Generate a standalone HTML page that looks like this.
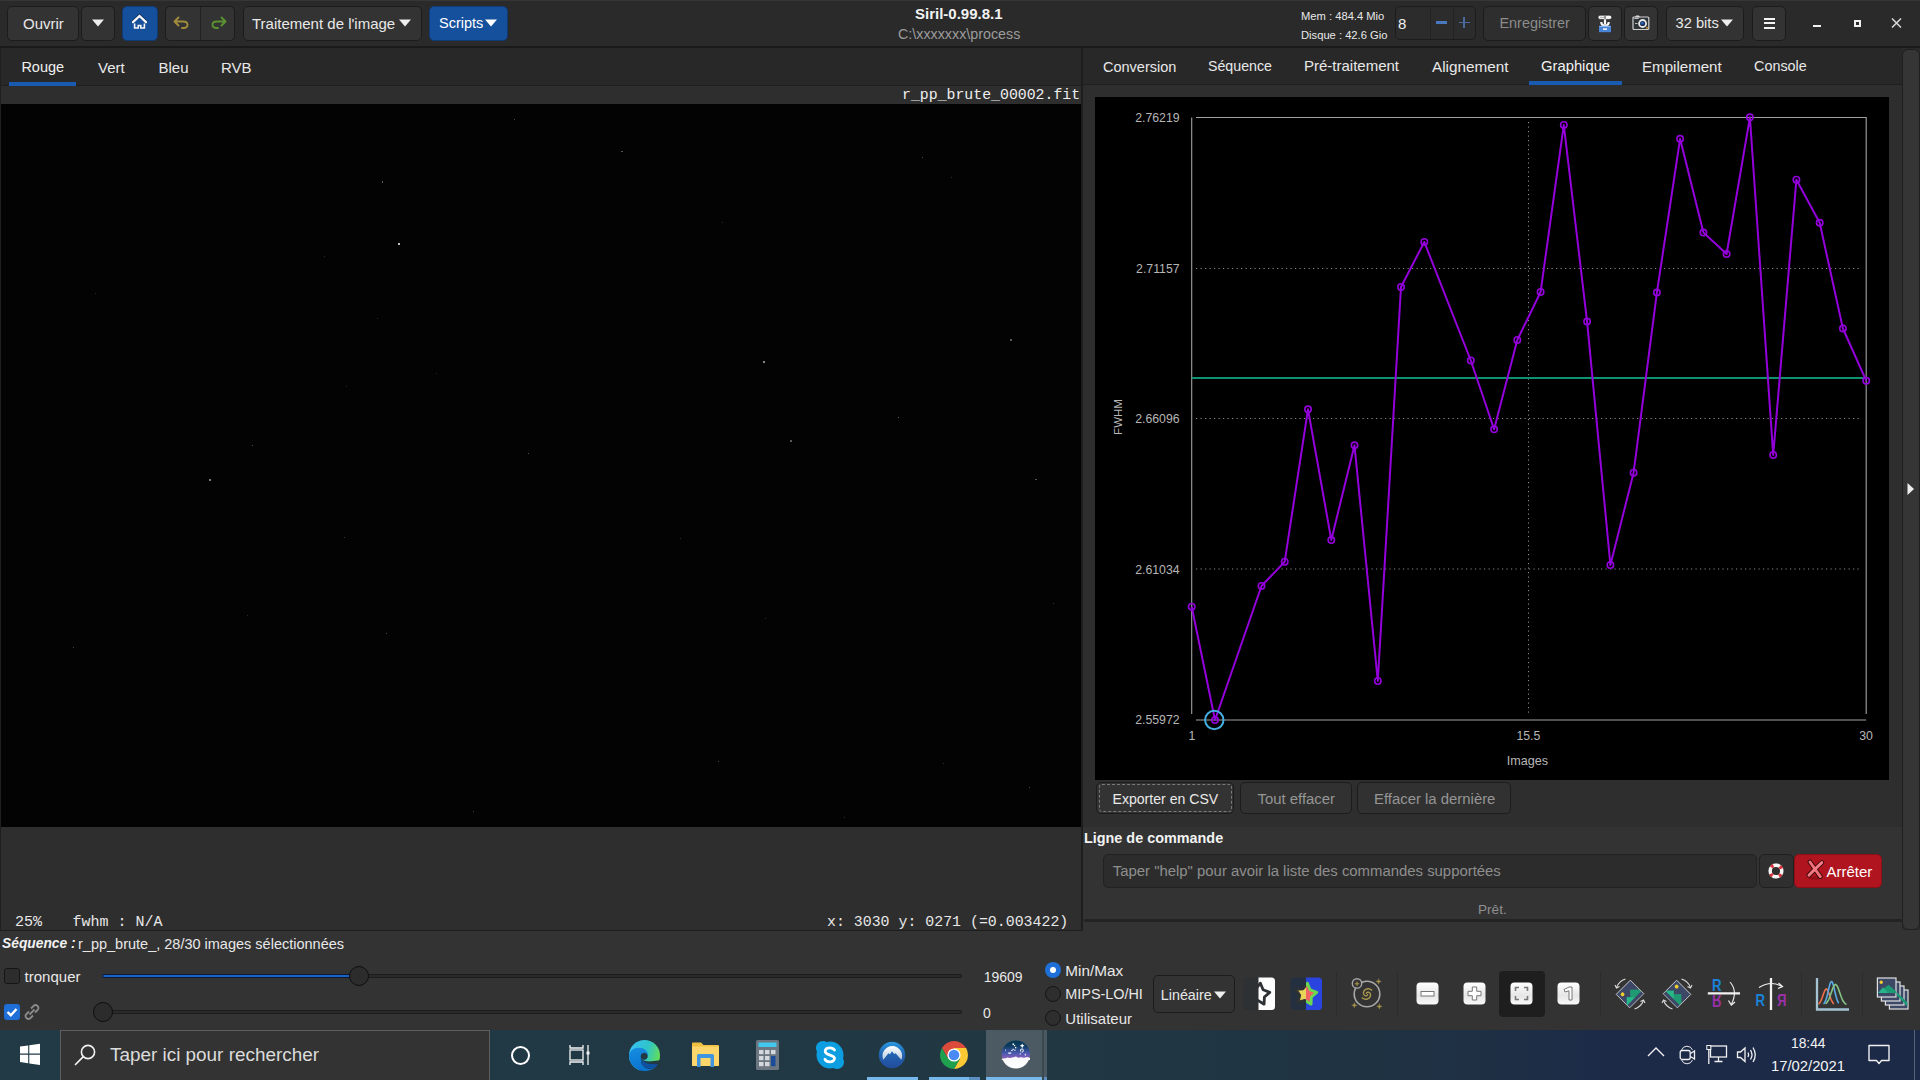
<!DOCTYPE html>
<html><head><meta charset="utf-8">
<style>
*{box-sizing:border-box;margin:0;padding:0}
html,body{width:1920px;height:1080px;overflow:hidden;background:#333333;font-family:"Liberation Sans",sans-serif;color:#e8e8e8}
.a{position:absolute}
.btn{position:absolute;background:#333333;border:1px solid #1c1c1c;border-radius:5px}
.blue{background:#15509c;border-color:#0f3a73}
.t{position:absolute;white-space:pre;line-height:1}
.mono{font-family:"Liberation Mono",monospace}
</style></head><body>

<!-- HEADER -->
<div class="a" style="left:0;top:0;width:1920px;height:47px;background:#2a2a2a"></div><div class="a" style="left:0;top:0;width:1920px;height:1px;background:#363636"></div>
<div class="a" style="left:0;top:46px;width:1920px;height:2px;background:#1a1a1a"></div>
<div class="btn" style="left:7px;top:6px;width:72px;height:35px"></div>
<div class="t" style="left:23px;top:16px;font-size:15px">Ouvrir</div>
<div class="btn" style="left:81px;top:6px;width:34px;height:35px"></div>
<svg class="a" style="left:91px;top:19px" width="14" height="8"><path d="M1 0.5 L13 0.5 L7 7.5 Z" fill="#eee"/></svg>
<div class="btn blue" style="left:122px;top:6px;width:36px;height:35px"></div>
<svg class="a" style="left:131px;top:13px" width="18" height="18" viewBox="0 0 18 18"><path d="M2 9.2 L8.5 3 L15 9.2" fill="none" stroke="#111" stroke-width="3" stroke-linecap="round" opacity="0.45" transform="translate(0 -0.6)"/><path d="M2 9.2 L8.5 3 L15 9.2" fill="none" stroke="#fafafa" stroke-width="2.3" stroke-linecap="round"/><path d="M3.6 10.6 V15 H7.2 V12.5 H9.8 V15 H13.4 V10.6" fill="none" stroke="#f4f4f4" stroke-width="1.6"/></svg>
<div class="btn" style="left:165px;top:6px;width:70px;height:35px"></div>
<div class="a" style="left:200px;top:7px;width:1px;height:33px;background:#222"></div>
<svg class="a" style="left:172px;top:15px" width="20" height="16" viewBox="0 0 20 16"><path d="M6.5 2.5 L2.5 6.5 L6.5 10.5 M3 6.5 L11 6.5 Q15.5 6.5 15.5 9.8 Q15.5 13 11.5 13 L10 13" fill="none" stroke="#a08c3c" stroke-width="1.9" stroke-linecap="round" stroke-linejoin="round"/></svg>
<svg class="a" style="left:208px;top:15px" width="20" height="16" viewBox="0 0 20 16"><path d="M13.5 2.5 L17.5 6.5 L13.5 10.5 M17 6.5 L9 6.5 Q4.5 6.5 4.5 9.8 Q4.5 13 8.5 13 L10 13" fill="none" stroke="#5a9232" stroke-width="1.9" stroke-linecap="round" stroke-linejoin="round"/></svg>
<div class="btn" style="left:243px;top:6px;width:179px;height:35px"></div>
<div class="t" style="left:252px;top:16px;font-size:15px">Traitement de l'image</div>
<svg class="a" style="left:398px;top:19px" width="14" height="8"><path d="M1 0.5 L13 0.5 L7 7.5 Z" fill="#eee"/></svg>
<div class="btn blue" style="left:429px;top:6px;width:79px;height:35px"></div>
<div class="t" style="left:439px;top:16px;font-size:14.5px;color:#fff">Scripts</div>
<svg class="a" style="left:484px;top:19px" width="14" height="8"><path d="M1 0.5 L13 0.5 L7 7.5 Z" fill="#fff"/></svg>

<div class="t" style="left:915px;top:6.3px;font-size:15px;font-weight:bold;color:#f2f2f2">Siril-0.99.8.1</div>
<div class="t" style="left:898px;top:27.2px;font-size:14.3px;color:#9c9c9c">C:\xxxxxxx\process</div>

<div class="t" style="left:1301px;top:10.5px;font-size:11.2px;color:#e8e8e8">Mem : 484.4 Mio</div>
<div class="t" style="left:1301px;top:29.9px;font-size:11.2px;color:#e8e8e8">Disque : 42.6 Gio</div>
<div class="btn" style="left:1395px;top:6px;width:81px;height:34px;background:#2c2c2c"></div>
<div class="a" style="left:1430px;top:7px;width:1px;height:32px;background:#232323"></div>
<div class="a" style="left:1453px;top:7px;width:1px;height:32px;background:#232323"></div>
<div class="t" style="left:1398px;top:15.5px;font-size:15px;color:#f0f0f0">8</div>
<div class="a" style="left:1435.5px;top:21.3px;width:11px;height:2.6px;background:#4a78c0"></div>
<div class="a" style="left:1458.5px;top:21.8px;width:11px;height:1.6px;background:#4a6a9c"></div>
<div class="a" style="left:1463.2px;top:17px;width:1.6px;height:11px;background:#4a6a9c"></div>
<div class="btn" style="left:1483px;top:6px;width:103px;height:35px;background:#2e2e2e"></div>
<div class="t" style="left:1499.5px;top:16px;font-size:14.4px;color:#8c8c8c">Enregistrer</div>
<div class="btn" style="left:1588px;top:6px;width:34px;height:35px"></div>
<svg class="a" style="left:1596px;top:13px" width="18" height="20" viewBox="0 0 18 20"><rect x="2" y="2.2" width="13.7" height="4.2" rx="2" fill="#fafafa" stroke="#111" stroke-width="0.6"/><rect x="3.6" y="3.8" width="5" height="1" fill="#aaa"/><rect x="8.6" y="3" width="0.9" height="2.8" fill="#222"/><path d="M9 6.3 V11.5" stroke="#fafafa" stroke-width="2.2"/><path d="M5.3 9 Q5.3 12.6 9 12.6 Q12.7 12.6 12.7 9" fill="none" stroke="#fafafa" stroke-width="2.2"/><rect x="3" y="12.8" width="12" height="6.4" fill="#4a86d8"/><rect x="3.3" y="13.2" width="11.4" height="0.8" fill="#9cc0f0"/><rect x="7" y="15.3" width="4" height="1.6" fill="#f4f4f4"/></svg>
<div class="btn" style="left:1624px;top:6px;width:34px;height:35px"></div>
<svg class="a" style="left:1632px;top:15px" width="18" height="16" viewBox="0 0 18 16"><rect x="1" y="2" width="15.8" height="12.5" rx="1" fill="#2e3338" stroke="#cfcfcf" stroke-width="1.2"/><path d="M3 2.2 L4 0.8 L7 0.8 L8 2.2" fill="#ddd" stroke="#bbb" stroke-width="0.6"/><rect x="2.2" y="3" width="4.5" height="1" fill="#bbb"/><rect x="3" y="8" width="2.5" height="0.9" fill="#ccc"/><circle cx="10.6" cy="8.5" r="4.4" fill="#e8e8e8"/><circle cx="10.6" cy="8.5" r="2.6" fill="#1d2f55"/><circle cx="10.3" cy="8.2" r="1.4" fill="#2a5fb8"/><rect x="14.2" y="12" width="1.6" height="1.6" fill="#e0a030"/></svg>
<div class="btn" style="left:1666px;top:6px;width:78px;height:35px"></div>
<div class="t" style="left:1675.5px;top:16px;font-size:14.7px">32 bits</div>
<svg class="a" style="left:1720px;top:19px" width="14" height="8"><path d="M1 0.5 L13 0.5 L7 7.5 Z" fill="#eee"/></svg>
<div class="btn" style="left:1752px;top:6px;width:34px;height:35px"></div>
<div class="a" style="left:1764px;top:17.5px;width:10.5px;height:2px;background:#f4f4f4"></div>
<div class="a" style="left:1764px;top:22px;width:10.5px;height:2px;background:#f4f4f4"></div>
<div class="a" style="left:1764px;top:26.5px;width:10.5px;height:2px;background:#f4f4f4"></div>
<div class="a" style="left:1813px;top:25px;width:8px;height:2px;background:#f0f0f0"></div>
<div class="a" style="left:1853.5px;top:19.8px;width:7px;height:7px;border:2px solid #f0f0f0"></div>
<svg class="a" style="left:1891px;top:18px" width="11" height="10" viewBox="0 0 11 10"><path d="M1 0.5 L10 9.5 M10 0.5 L1 9.5" stroke="#d8d8d8" stroke-width="1.5"/></svg>

<!-- LEFT PANEL -->
<div class="a" style="left:0;top:48px;width:1081px;height:37px;background:#282828"></div>
<div class="a" style="left:0;top:85px;width:1081px;height:1px;background:#1f1f1f"></div>
<div class="a" style="left:0;top:86px;width:1081px;height:18px;background:#2e2e2e"></div>
<div class="a" style="left:0;top:104px;width:1081px;height:723px;background:#030303"></div>
<div class="a" style="left:0;top:827px;width:1081px;height:103px;background:#2e2e2e"></div>
<div class="a" style="left:397.7px;top:243.0px;width:2px;height:2px;background:#ffffff;border-radius:50%"></div>
<div class="a" style="left:382.1px;top:181.3px;width:1.3px;height:1.3px;background:#707070;border-radius:50%"></div>
<div class="a" style="left:513.7px;top:118.7px;width:1.2px;height:1.2px;background:#616161;border-radius:50%"></div>
<div class="a" style="left:251.7px;top:445.1px;width:1.2px;height:1.2px;background:#696969;border-radius:50%"></div>
<div class="a" style="left:528.1px;top:452.7px;width:1.2px;height:1.2px;background:#696969;border-radius:50%"></div>
<div class="a" style="left:323.5px;top:256.2px;width:1px;height:1px;background:#3c3c3c;border-radius:50%"></div>
<div class="a" style="left:376.8px;top:317.8px;width:1px;height:1px;background:#343434;border-radius:50%"></div>
<div class="a" style="left:435.5px;top:372.8px;width:1px;height:1px;background:#343434;border-radius:50%"></div>
<div class="a" style="left:346.2px;top:385.5px;width:1px;height:1px;background:#343434;border-radius:50%"></div>
<div class="a" style="left:95.2px;top:292.8px;width:1px;height:1px;background:#343434;border-radius:50%"></div>
<div class="a" style="left:763.4px;top:361.4px;width:1.8px;height:1.8px;background:#acacac;border-radius:50%"></div>
<div class="a" style="left:621.4px;top:151.1px;width:1.2px;height:1.2px;background:#616161;border-radius:50%"></div>
<div class="a" style="left:922.1px;top:157.1px;width:1.2px;height:1.2px;background:#616161;border-radius:50%"></div>
<div class="a" style="left:897.6px;top:417.0px;width:1.4px;height:1.4px;background:#7f7f7f;border-radius:50%"></div>
<div class="a" style="left:790.4px;top:440.4px;width:1.2px;height:1.2px;background:#616161;border-radius:50%"></div>
<div class="a" style="left:1010.4px;top:339.4px;width:1.2px;height:1.2px;background:#616161;border-radius:50%"></div>
<div class="a" style="left:950.8px;top:176.8px;width:1px;height:1px;background:#3c3c3c;border-radius:50%"></div>
<div class="a" style="left:722.2px;top:222.2px;width:1px;height:1px;background:#3c3c3c;border-radius:50%"></div>
<div class="a" style="left:209.2px;top:479.1px;width:1.6px;height:1.6px;background:#969696;border-radius:50%"></div>
<div class="a" style="left:386.2px;top:633.1px;width:1.2px;height:1.2px;background:#5a5a5a;border-radius:50%"></div>
<div class="a" style="left:72.7px;top:647.1px;width:1.2px;height:1.2px;background:#5a5a5a;border-radius:50%"></div>
<div class="a" style="left:343.8px;top:536.9px;width:1px;height:1px;background:#4b4b4b;border-radius:50%"></div>
<div class="a" style="left:473.2px;top:810.5px;width:1.2px;height:1.2px;background:#5a5a5a;border-radius:50%"></div>
<div class="a" style="left:246.5px;top:614.7px;width:1px;height:1px;background:#343434;border-radius:50%"></div>
<div class="a" style="left:1035.4px;top:478.9px;width:1.2px;height:1.2px;background:#616161;border-radius:50%"></div>
<div class="a" style="left:718.2px;top:760.5px;width:1.2px;height:1.2px;background:#616161;border-radius:50%"></div>
<div class="a" style="left:1053.4px;top:602.7px;width:1px;height:1px;background:#4b4b4b;border-radius:50%"></div>
<div class="a" style="left:764.9px;top:617.8px;width:1px;height:1px;background:#3c3c3c;border-radius:50%"></div>
<div class="a" style="left:1028.6px;top:786.6px;width:1.2px;height:1.2px;background:#5a5a5a;border-radius:50%"></div>
<div class="a" style="left:844.4px;top:816.8px;width:1px;height:1px;background:#3c3c3c;border-radius:50%"></div>
<div class="a" style="left:942.7px;top:763.4px;width:1px;height:1px;background:#3c3c3c;border-radius:50%"></div>
<div class="a" style="left:680.0px;top:538.0px;width:1px;height:1px;background:#3c3c3c;border-radius:50%"></div>
<div class="a" style="left:0;top:48px;width:1px;height:882px;background:#1f1f1f"></div>
<div class="t" style="left:21.4px;top:60.1px;font-size:14.5px;color:#f0f0f0">Rouge</div>
<div class="t" style="left:98px;top:60.1px;font-size:15px;color:#e8e8e8">Vert</div>
<div class="t" style="left:158.5px;top:60.1px;font-size:15px;color:#e8e8e8">Bleu</div>
<div class="t" style="left:221px;top:60.1px;font-size:15px;color:#e8e8e8">RVB</div>
<div class="a" style="left:9px;top:82px;width:67px;height:4px;background:#1a5bb2"></div>
<div class="t mono" style="left:902px;top:88.3px;font-size:14.85px;color:#efefef">r_pp_brute_00002.fit</div>
<div class="t mono" style="left:15px;top:914.5px;font-size:15px;color:#e8e8e8">25%</div><div class="t mono" style="left:72.5px;top:914.5px;font-size:15px;color:#e8e8e8">fwhm : N/A</div>
<div class="t mono" style="left:827px;top:914.5px;font-size:14.9px;color:#e8e8e8">x: 3030 y: 0271 (=0.003422)</div>
<div class="a" style="left:1081px;top:48px;width:2px;height:882px;background:#1e1e1e"></div>
<div class="a" style="left:0;top:929.5px;width:1083px;height:1px;background:#1e1e1e"></div>

<!-- RIGHT PANEL -->
<div class="a" style="left:1083px;top:48px;width:819px;height:36px;background:#282828"></div>
<div class="a" style="left:1083px;top:84px;width:819px;height:1px;background:#1f1f1f"></div>
<div class="t" style="left:1103px;top:59.8px;font-size:14.5px">Conversion</div>
<div class="t" style="left:1208px;top:59.3px;font-size:14.2px">Séquence</div>
<div class="t" style="left:1304px;top:58px;font-size:15px">Pré-traitement</div>
<div class="t" style="left:1432px;top:59.3px;font-size:15.3px">Alignement</div>
<div class="t" style="left:1541px;top:59.3px;font-size:14.8px;color:#f2f2f2">Graphique</div>
<div class="t" style="left:1642px;top:59.3px;font-size:15.1px">Empilement</div>
<div class="t" style="left:1754px;top:59.3px;font-size:14.4px">Console</div>
<div class="a" style="left:1529px;top:81px;width:93px;height:4px;background:#1a5bb2"></div>
<div class="a" style="left:1083px;top:85px;width:819px;height:742px;background:#2e2e2e"></div>
<div class="a" style="left:1083px;top:827px;width:819px;height:92px;background:#333333"></div>
<div class="a" style="left:1084px;top:919.2px;width:818px;height:3.3px;background:#232323;border-radius:1.5px"></div>

<div class="a" style="left:1902px;top:48px;width:18px;height:882px;background:#2a2a2a"></div>
<div class="a" style="left:1902px;top:48.5px;width:18px;height:881px;background:#353535;border:1px solid #1f1f1f;border-radius:6px"></div>

<!-- GRAPH -->
<svg class="a" style="left:1095px;top:97px" width="794" height="683" viewBox="1095 97 794 683">
<rect x="1095" y="97" width="794" height="683" fill="#000"/>
<g stroke="#8a8a8a" stroke-width="1" stroke-dasharray="1.2 3.3" fill="none">
<path d="M1196 268.5 H1862 M1196 418.5 H1862 M1196 569 H1862"/>
<path d="M1528.5 122 V714"/>
</g>
<g stroke="#a2a2a2" stroke-width="1.1" fill="none">
<path d="M1191.7 117.5 V714 M1196 117.5 H1866.2 V714 M1196 720 H1866.2"/>
</g>
<path d="M1191.7 378 H1866.2" stroke="#0f9272" stroke-width="2"/>
<polyline points="1191.7,606.7 1215.0,720 1261.5,586 1284.7,561.7 1308.0,409.3 1331.3,540 1354.5,445.3 1377.8,681 1401.0,287 1424.3,242 1470.8,360.5 1494.1,429.3 1517.3,340 1540.6,292 1563.8,125 1587.1,321.6 1610.4,565 1633.6,472.7 1656.9,292.6 1680.1,138.8 1703.4,232.6 1726.6,254 1749.9,117.3 1773.2,455 1796.4,179.7 1819.7,222.8 1842.9,328.5 1866.2,380.7" fill="none" stroke="#9400dc" stroke-width="2" stroke-linejoin="round"/>
<g fill="none" stroke="#9400dc" stroke-width="1.6"><circle cx="1191.7" cy="606.7" r="3.2"/><circle cx="1215.0" cy="720" r="3.2"/><circle cx="1261.5" cy="586" r="3.2"/><circle cx="1284.7" cy="561.7" r="3.2"/><circle cx="1308.0" cy="409.3" r="3.2"/><circle cx="1331.3" cy="540" r="3.2"/><circle cx="1354.5" cy="445.3" r="3.2"/><circle cx="1377.8" cy="681" r="3.2"/><circle cx="1401.0" cy="287" r="3.2"/><circle cx="1424.3" cy="242" r="3.2"/><circle cx="1470.8" cy="360.5" r="3.2"/><circle cx="1494.1" cy="429.3" r="3.2"/><circle cx="1517.3" cy="340" r="3.2"/><circle cx="1540.6" cy="292" r="3.2"/><circle cx="1563.8" cy="125" r="3.2"/><circle cx="1587.1" cy="321.6" r="3.2"/><circle cx="1610.4" cy="565" r="3.2"/><circle cx="1633.6" cy="472.7" r="3.2"/><circle cx="1656.9" cy="292.6" r="3.2"/><circle cx="1680.1" cy="138.8" r="3.2"/><circle cx="1703.4" cy="232.6" r="3.2"/><circle cx="1726.6" cy="254" r="3.2"/><circle cx="1749.9" cy="117.3" r="3.2"/><circle cx="1773.2" cy="455" r="3.2"/><circle cx="1796.4" cy="179.7" r="3.2"/><circle cx="1819.7" cy="222.8" r="3.2"/><circle cx="1842.9" cy="328.5" r="3.2"/><circle cx="1866.2" cy="380.7" r="3.2"/></g>
<circle cx="1214.3" cy="720" r="9.2" fill="none" stroke="#45aee0" stroke-width="2"/>
<g font-family="Liberation Sans" font-size="12.3" fill="#b6b6b6" text-anchor="end">
<text x="1179.6" y="122.2">2.76219</text>
<text x="1179.6" y="272.5">2.71157</text>
<text x="1179.6" y="423">2.66096</text>
<text x="1179.6" y="573.6">2.61034</text>
<text x="1179.6" y="724">2.55972</text>
</g>
<g font-family="Liberation Sans" font-size="12.3" fill="#b6b6b6" text-anchor="middle">
<text x="1192" y="739.7">1</text>
<text x="1528.4" y="739.7">15.5</text>
<text x="1866" y="739.7">30</text>
<text x="1527.3" y="764.5" font-size="12.6">Images</text>
<text x="0" y="0" font-size="11.5" transform="translate(1121.5 417) rotate(-90)">FWHM</text>
</g>
</svg>
<svg class="a" style="left:1906px;top:482px" width="9" height="14"><path d="M1.5 1 L8 7 L1.5 13 Z" fill="#eee"/></svg>
<div class="btn" style="left:1096px;top:782px;width:138px;height:32px;background:#333"></div>
<div class="a" style="left:1098.5px;top:784px;width:133px;height:28px;border:1px dashed #7a7a7a;border-radius:3px"></div>
<div class="t" style="left:1112.5px;top:792.3px;font-size:14.1px;color:#eaeaea">Exporter en CSV</div>
<div class="btn" style="left:1240px;top:782px;width:112px;height:32px;background:#313131"></div>
<div class="t" style="left:1257.5px;top:791.5px;font-size:14.9px;color:#959595">Tout effacer</div>
<div class="btn" style="left:1357px;top:782px;width:154px;height:32px;background:#313131"></div>
<div class="t" style="left:1374px;top:791.5px;font-size:14.9px;color:#959595">Effacer la dernière</div>
<div class="t" style="left:1084px;top:830.5px;font-size:14.4px;font-weight:bold;color:#f2f2f2">Ligne de commande</div>
<div class="btn" style="left:1103px;top:854px;width:654px;height:34px;background:#2c2c2c;border-color:#222"></div>
<div class="t" style="left:1112.8px;top:863.5px;font-size:14.9px;color:#8e8e8e">Taper "help" pour avoir la liste des commandes supportées</div>
<div class="btn" style="left:1759px;top:854px;width:35px;height:34px;background:#2f2f2f;border-color:#202020"></div>
<svg class="a" style="left:1767px;top:862px" width="18" height="18" viewBox="0 0 18 18"><circle cx="9" cy="9" r="5.9" fill="none" stroke="#f6f6f6" stroke-width="3.6"/><circle cx="9" cy="9" r="5.9" fill="none" stroke="#e0323c" stroke-width="3.6" stroke-dasharray="2.6 6.67" stroke-dashoffset="-3.3"/><circle cx="9" cy="9" r="7.8" fill="none" stroke="#222" stroke-width="0.5" opacity="0.5"/></svg>
<div class="btn" style="left:1794px;top:854px;width:88px;height:34px;background:#b0141e;border-color:#8a1018"></div>
<svg class="a" style="left:1805px;top:859px" width="20" height="22" viewBox="0 0 20 22"><ellipse cx="10" cy="19" rx="6" ry="1.6" fill="#6a0a10" opacity="0.5"/><g stroke-linecap="round"><path d="M5 3 Q9.5 9.5 15.3 17.6" stroke="#2a0506" stroke-width="4.6"/><path d="M16.8 3.6 Q10.5 9.5 3.9 16.2" stroke="#2a0506" stroke-width="4.6"/><path d="M5 3 Q9.5 9.5 15.3 17.6" stroke="#f0707a" stroke-width="3"/><path d="M16.8 3.6 Q10.5 9.5 3.9 16.2" stroke="#f27a84" stroke-width="3"/></g></svg>
<div class="t" style="left:1826.4px;top:864.3px;font-size:15px;color:#fff">Arrêter</div>
<div class="t" style="left:1478px;top:903.3px;font-size:13.6px;color:#8f8f8f">Prêt.</div>

<!-- BOTTOM BAR -->
<div class="t" style="left:2px;top:937px;font-size:13.8px;font-weight:bold;font-style:italic;color:#f2f2f2">Séquence :</div>
<div class="t" style="left:78px;top:936.7px;font-size:14.5px;color:#e8e8e8">r_pp_brute_, 28/30 images sélectionnées</div>
<div class="a" style="left:4px;top:968px;width:16px;height:16px;background:#2d2d2d;border:1px solid #151515;border-radius:3px"></div>
<div class="t" style="left:24.6px;top:969px;font-size:15px;color:#e8e8e8">tronquer</div>
<div class="a" style="left:102px;top:973.8px;width:860px;height:4px;background:#2a2a2a;border:1px solid #1c1c1c;border-radius:2px"></div>
<div class="a" style="left:102px;top:973.8px;width:257px;height:4px;background:#1c62c4;border:1px solid #0a1a33;border-radius:2px"></div>
<div class="a" style="left:349px;top:966px;width:20px;height:20px;background:#2c2c2c;border:1.3px solid #0e0e0e;border-radius:50%"></div>
<div class="a" style="left:4px;top:1004px;width:16px;height:16px;background:#1f6fd8;border-radius:3px"></div>
<svg class="a" style="left:4px;top:1004px" width="16" height="16"><path d="M3.5 8 L6.8 11.2 L12.5 5" stroke="#fff" stroke-width="2.4" fill="none"/></svg>
<svg class="a" style="left:23px;top:1003px" width="18" height="18" viewBox="0 0 18 18"><g fill="none" stroke="#8a8a8a" stroke-width="1.8"><path d="M8 5.5 L10.5 3 Q12.5 1 14.5 3 Q16.5 5 14.5 7 L12 9.5"/><path d="M10 12.5 L7.5 15 Q5.5 17 3.5 15 Q1.5 13 3.5 11 L6 8.5"/><path d="M6.5 11.5 L11.5 6.5"/></g></svg>
<div class="a" style="left:102px;top:1009.8px;width:860px;height:4px;background:#2a2a2a;border:1px solid #1c1c1c;border-radius:2px"></div>
<div class="a" style="left:93px;top:1001.5px;width:20px;height:20px;background:#2c2c2c;border:1.3px solid #0e0e0e;border-radius:50%"></div>
<div class="t" style="left:983.7px;top:969.8px;font-size:14px;color:#e8e8e8">19609</div>
<div class="t" style="left:983px;top:1005.6px;font-size:14px;color:#e8e8e8">0</div>
<div class="a" style="left:1045px;top:962px;width:16px;height:16px;background:#1f6fd8;border-radius:50%"></div>
<div class="a" style="left:1050px;top:967px;width:6px;height:6px;background:#fff;border-radius:50%"></div>
<div class="t" style="left:1065.3px;top:962.7px;font-size:15.3px;color:#e8e8e8">Min/Max</div>
<div class="a" style="left:1045px;top:986px;width:16px;height:16px;background:#2e2e2e;border:1px solid #151515;border-radius:50%"></div>
<div class="t" style="left:1065.3px;top:987px;font-size:14.4px;color:#e8e8e8">MIPS-LO/HI</div>
<div class="a" style="left:1045px;top:1010px;width:16px;height:16px;background:#2e2e2e;border:1px solid #151515;border-radius:50%"></div>
<div class="t" style="left:1065.3px;top:1010.6px;font-size:15px;color:#e8e8e8">Utilisateur</div>
<div class="btn" style="left:1153px;top:975px;width:82px;height:38px;background:#333;border-color:#1c1c1c"></div>
<div class="t" style="left:1160.8px;top:987.6px;font-size:14.3px;color:#e8e8e8">Linéaire</div>
<svg class="a" style="left:1213px;top:991px" width="14" height="8"><path d="M1 0.5 L13 0.5 L7 7.5 Z" fill="#eee"/></svg>
<!-- toolbar icons -->
<svg class="a" style="left:1243px;top:977px" width="33" height="34" viewBox="0 0 33 34"><path d="M4 0.5 H15.5 V33 H4 Q0.5 33 0.5 29.5 V4 Q0.5 0.5 4 0.5 Z" fill="#2e3134"/><path d="M15.5 0.5 H28.5 Q32 0.5 32 4 V29.5 Q32 33 28.5 33 H15.5 Z" fill="#fdfdfd"/><path d="M17.4 6.2 L20.1 12.8 L26.8 15.4 L21.4 20.0 L21.1 27.2 L14.9 23.4 L8.0 25.4 L9.7 18.4 L5.7 12.4 L12.9 11.8 Z" fill="none" stroke="#2e3134" stroke-width="2.8" stroke-linejoin="round"/></svg>
<svg class="a" style="left:1290px;top:977px" width="33" height="34" viewBox="0 0 33 34"><defs><clipPath id="cl"><rect x="0" y="0" width="16" height="34"/></clipPath><clipPath id="cr"><rect x="16" y="0" width="17" height="34"/></clipPath></defs><path d="M4 0.5 H16 V33 H4 Q0.5 33 0.5 29.5 V4 Q0.5 0.5 4 0.5 Z" fill="#243040"/><path d="M16 0.5 H28.5 Q32 0.5 32 4 V29.5 Q32 33 28.5 33 H16 Z" fill="#2a44e0"/><path d="M17.4 6.2 L20.1 12.8 L26.8 15.4 L21.4 20.0 L21.1 27.2 L14.9 23.4 L8.0 25.4 L9.7 18.4 L5.7 12.4 L12.9 11.8 Z" fill="#e8d458" stroke="#2e3134" stroke-width="2.8" stroke-linejoin="round" clip-path="url(#cl)"/><path d="M17.4 6.2 L20.1 12.8 L26.8 15.4 L21.4 20.0 L21.1 27.2 L14.9 23.4 L8.0 25.4 L9.7 18.4 L5.7 12.4 L12.9 11.8 Z" fill="#f06266" stroke="#68d850" stroke-width="2.8" stroke-linejoin="round" clip-path="url(#cr)"/></svg>
<div class="a" style="left:1336px;top:971px;width:1px;height:46px;background:#2c2c2c"></div>
<svg class="a" style="left:1345px;top:972px" width="45" height="44" viewBox="0 0 45 44"><circle cx="22" cy="22" r="12.8" fill="none" stroke="#a8a8a8" stroke-width="1.6"/><circle cx="12" cy="11.4" r="4.7" fill="#333" stroke="#a8a8a8" stroke-width="1.4"/><g fill="#a8984e" stroke="#a8984e" stroke-width="0.4" stroke-linejoin="round"><path d="M33.6 6.7 Q33.6 9.4 36.300000000000004 9.4 Q33.6 9.4 33.6 12.100000000000001 Q33.6 9.4 30.900000000000002 9.4 Q33.6 9.4 33.6 6.7 Z"/><path d="M9.4 30.500000000000004 Q9.4 33.2 12.100000000000001 33.2 Q9.4 33.2 9.4 35.900000000000006 Q9.4 33.2 6.7 33.2 Q9.4 33.2 9.4 30.500000000000004 Z"/><path d="M34.4 31.7 Q34.4 34.4 37.1 34.4 Q34.4 34.4 34.4 37.1 Q34.4 34.4 31.7 34.4 Q34.4 34.4 34.4 31.7 Z"/><path d="M12 9.5 Q12 11.8 14.3 11.8 Q12 11.8 12 14.100000000000001 Q12 11.8 9.7 11.8 Q12 11.8 12 9.5 Z"/></g><g fill="none" stroke="#a8984e" stroke-width="1.4" stroke-linecap="round"><path d="M22.51 22.61 L22.50 22.84 L22.43 23.07 L22.30 23.30 L22.11 23.50 L21.85 23.68 L21.55 23.80 L21.20 23.87 L20.83 23.88 L20.43 23.80 L20.03 23.65 L19.65 23.41 L19.29 23.09 L18.98 22.70 L18.73 22.23 L18.56 21.70 L18.48 21.12 L18.50 20.51 L18.62 19.89 L18.86 19.27 L19.21 18.68 L19.68 18.13 L20.24 17.65 L20.91 17.26 L21.65 16.97 L22.45 16.80 L23.30 16.77 L24.18 16.87 L25.05 17.13 L25.89 17.53 L26.67 18.08"/><path d="M21.49 21.39 L21.50 21.16 L21.57 20.93 L21.70 20.70 L21.89 20.50 L22.15 20.32 L22.45 20.20 L22.80 20.13 L23.17 20.12 L23.57 20.20 L23.97 20.35 L24.35 20.59 L24.71 20.91 L25.02 21.30 L25.27 21.77 L25.44 22.30 L25.52 22.88 L25.50 23.49 L25.38 24.11 L25.14 24.73 L24.79 25.32 L24.32 25.87 L23.76 26.35 L23.09 26.74 L22.35 27.03 L21.55 27.20 L20.70 27.23 L19.82 27.13 L18.95 26.87 L18.11 26.47 L17.33 25.92"/></g></svg>
<div class="a" style="left:1397px;top:971px;width:1px;height:46px;background:#2c2c2c"></div>
<div class="a" style="left:1499px;top:971px;width:46px;height:46px;background:#1e1e1e;border-radius:4px"></div>
<svg class="a" style="left:1416px;top:982px" width="23" height="23" viewBox="0 0 23 23"><defs><linearGradient id="zg" x1="0" y1="0" x2="0" y2="1"><stop offset="0" stop-color="#ffffff"/><stop offset="0.6" stop-color="#e6e6e6"/><stop offset="1" stop-color="#fafafa"/></linearGradient></defs><rect x="0.5" y="0.5" width="22" height="22" rx="4" fill="url(#zg)"/><rect x="5" y="9.5" width="13" height="4.5" fill="#fff" stroke="#777" stroke-width="1"/></svg>
<svg class="a" style="left:1463px;top:982px" width="23" height="23" viewBox="0 0 23 23"><rect x="0.5" y="0.5" width="22" height="22" rx="4" fill="url(#zg)"/><path d="M9.3 5 H13.7 V9.3 H18 V13.7 H13.7 V18 H9.3 V13.7 H5 V9.3 H9.3 Z" fill="#fff" stroke="#777" stroke-width="1"/></svg>
<svg class="a" style="left:1510px;top:982px" width="23" height="23" viewBox="0 0 23 23"><rect x="0.5" y="0.5" width="22" height="22" rx="4" fill="url(#zg)"/><g fill="none" stroke="#777" stroke-width="1.6"><path d="M5.5 9 V5.5 H9 M14 5.5 H17.5 V9 M17.5 14 V17.5 H14 M9 17.5 H5.5 V14"/></g></svg>
<svg class="a" style="left:1557px;top:982px" width="23" height="23" viewBox="0 0 23 23"><rect x="0.5" y="0.5" width="22" height="22" rx="4" fill="url(#zg)"/><path d="M7 7.5 L12 5 L15 5 L15 18 L12 18 L12 8.8 L8 10 Z" fill="#fff" stroke="#777" stroke-width="1"/></svg>
<div class="a" style="left:1600px;top:971px;width:1px;height:46px;background:#2c2c2c"></div>
<svg class="a" style="left:1612px;top:977px" width="36" height="34" viewBox="0 0 36 34"><g transform="rotate(-45 18 17)"><rect x="8" y="7.5" width="20" height="19" fill="#3d4866" stroke="#cfcfcf" stroke-width="0.9"/><circle cx="12.5" cy="12" r="1.9" fill="#f0cc30"/><path d="M8.5 24 L8.5 22 L13.5 17 L16 19.5 L21 14 L27.5 20 L27.5 24 Z" fill="#1f9a72"/><path d="M8.5 24 L8.5 22 L13.5 17 L20 24 Z" fill="#28b888"/><rect x="8.5" y="23" width="19" height="3" fill="#3d4866"/></g><path d="M4.5 10.5 Q7 4 13.5 2" fill="none" stroke="#dcdcdc" stroke-width="1.1"/><path d="M3 8 L4.5 11 L7.5 9.5" fill="none" stroke="#dcdcdc" stroke-width="1.1"/><path d="M31.5 23.5 Q29 30 22.5 32" fill="none" stroke="#dcdcdc" stroke-width="1.1"/><path d="M33 26 L31.5 23 L28.5 24.5" fill="none" stroke="#dcdcdc" stroke-width="1.1"/></svg>
<svg class="a" style="left:1659px;top:977px" width="36" height="34" viewBox="0 0 36 34"><g transform="rotate(45 18 17)"><rect x="8" y="7.5" width="20" height="19" fill="#3d4866" stroke="#cfcfcf" stroke-width="0.9"/><circle cx="12.5" cy="12" r="1.9" fill="#f0cc30"/><path d="M8.5 24 L8.5 22 L13.5 17 L16 19.5 L21 14 L27.5 20 L27.5 24 Z" fill="#1f9a72"/><path d="M8.5 24 L8.5 22 L13.5 17 L20 24 Z" fill="#28b888"/><rect x="8.5" y="23" width="19" height="3" fill="#3d4866"/></g><path d="M22.5 2 Q29 4 31.5 10.5" fill="none" stroke="#dcdcdc" stroke-width="1.1"/><path d="M28.5 9.5 L31.5 11 L33 8" fill="none" stroke="#dcdcdc" stroke-width="1.1"/><path d="M13.5 32 Q7 30 4.5 23.5" fill="none" stroke="#dcdcdc" stroke-width="1.1"/><path d="M7.5 24.5 L4.5 23 L3 26" fill="none" stroke="#dcdcdc" stroke-width="1.1"/></svg>
<svg class="a" style="left:1707px;top:977px" width="34" height="34" viewBox="0 0 34 34"><g font-family="Liberation Sans" font-weight="bold" font-size="17"><text x="0" y="0" fill="#1a82d8" transform="translate(5 14.3) scale(0.78 0.92)">R</text><text x="0" y="0" fill="#9a30a8" transform="translate(5 18.3) scale(0.78 -0.92)">R</text></g><path d="M0.8 16.3 H33" stroke="#f2f2f2" stroke-width="2.2"/><path d="M23 5 Q31 14 24.5 27" fill="none" stroke="#f0f0f0" stroke-width="1.1"/><path d="M21.5 23.5 L24.3 28 L28 25" fill="none" stroke="#f0f0f0" stroke-width="1.2"/></svg>
<svg class="a" style="left:1754px;top:977px" width="34" height="34" viewBox="0 0 34 34"><path d="M17 1 V33" stroke="#f2f2f2" stroke-width="2.3"/><g font-family="Liberation Sans" font-weight="bold" font-size="17"><text x="0" y="0" fill="#1a82d8" transform="translate(1.5 28.8) scale(0.78 0.92)">R</text><text x="0" y="0" fill="#9a30a8" transform="translate(32.5 28.8) scale(-0.78 0.92)">R</text></g><path d="M5 10.5 Q17 3 28 9.5" fill="none" stroke="#f0f0f0" stroke-width="1.1"/><path d="M24.5 6 L28.5 9.5 L24 11.5" fill="none" stroke="#f0f0f0" stroke-width="1.2"/></svg>
<div class="a" style="left:1801px;top:971px;width:1px;height:46px;background:#2c2c2c"></div>
<svg class="a" style="left:1815px;top:977px" width="34" height="34" viewBox="0 0 34 34"><path d="M2 1 V32.5 H34" fill="none" stroke="#a4c4d4" stroke-width="2.3"/><g fill="none" stroke-width="1.6" stroke-linecap="round"><path d="M4.0 26.6 L4.8 25.7 L5.6 24.4 L6.4 22.7 L7.2 20.6 L8.0 18.3 L8.8 16.0 L9.6 14.0 L10.4 12.6 L11.2 12.0 L12.0 12.4 L12.8 13.6 L13.6 15.5 L14.4 17.7 L15.2 20.0 L16.0 22.2 L16.8 24.0 L17.6 25.4 L18.4 26.4" stroke="#f07050"/><path d="M9.0 26.5 L9.8 25.4 L10.6 23.7 L11.4 21.4 L12.2 18.5 L13.0 15.1 L13.8 11.5 L14.6 8.3 L15.4 5.8 L16.2 4.6 L17.0 4.8 L17.8 6.4 L18.6 9.1 L19.4 12.4 L20.2 16.0 L21.0 19.3 L21.8 22.0 L22.6 24.2 L23.4 25.7" stroke="#5aaae8"/><path d="M11.0 26.4 L11.8 25.6 L12.6 24.5 L13.4 23.1 L14.2 21.3 L15.0 19.3 L15.8 17.0 L16.6 14.7 L17.4 12.4 L18.2 10.4 L19.0 8.8 L19.8 7.8 L20.6 7.5 L21.4 8.0 L22.2 9.1 L23.0 10.8 L23.8 12.9 L24.6 15.3 L25.4 17.6 L26.2 19.8 L27.0 21.8 L27.8 23.5 L28.6 24.8 L29.4 25.8 L30.2 26.6 L31.0 27.1" stroke="#88c488"/></g></svg>
<div class="a" style="left:1862px;top:971px;width:1px;height:46px;background:#2c2c2c"></div>
<svg class="a" style="left:1876px;top:977px" width="34" height="34" viewBox="0 0 34 34"><g stroke="#e2e2e2" stroke-width="1.2" fill="#3d4866"><rect x="13.4" y="13" width="18.6" height="19"/><rect x="9.4" y="9" width="18.6" height="19"/><rect x="5.4" y="5" width="18.6" height="19"/><rect x="1.4" y="1" width="18.6" height="19"/></g><circle cx="5.2" cy="5.3" r="1.7" fill="#f0cc30"/><path d="M13.5 8 L20 14 L20 16.2 L20.6 16.2 L31.4 27.5 L31.4 20 L20.6 9 Z" fill="#1f9a72" opacity="0"/><path d="M2 16 L12.5 7.8 L20 14.3 L20 16 Z" fill="#1d9a74"/><path d="M2 16 L7 10.2 L12 16 Z" fill="#28b48a"/><path d="M20.6 14.8 L31.4 25.5 L31.4 29.5 L20.6 18 Z" fill="#1d9a74"/></svg>

<!-- TASKBAR -->
<div class="a" style="left:0;top:1030px;width:1920px;height:50px;background:linear-gradient(90deg,#213a46 0%,#213843 55%,#1f3342 70%,#1e2f44 78%,#1c2a48 84%,#1c2a47 100%)"></div>
<svg class="a" style="left:19px;top:1043px" width="23" height="24" viewBox="0 0 23 24"><path d="M1 3.6 L9.2 2.4 L9.2 10.6 L1 10.6 Z M10.3 2.2 L21 0.8 L21 10.6 L10.3 10.6 Z M1 11.8 L9.2 11.8 L9.2 20.2 L1 19 Z M10.3 11.8 L21 11.8 L21 22 L10.3 20.4 Z" fill="#fff"/></svg>
<div class="a" style="left:60px;top:1030px;width:430px;height:50px;background:#333333;border:1px solid #5e5e5e;border-bottom:none"></div>
<svg class="a" style="left:72px;top:1043px" width="26" height="25" viewBox="0 0 26 25"><circle cx="16" cy="9" r="6.6" fill="none" stroke="#f2f2f2" stroke-width="1.6"/><path d="M11.3 13.7 L3.5 21.5" stroke="#f2f2f2" stroke-width="1.7" stroke-linecap="round"/></svg>
<div class="t" style="left:110px;top:1046.3px;font-size:18.9px;color:#dcdcdc">Taper ici pour rechercher</div>
<div class="a" style="left:510.5px;top:1045.5px;width:19px;height:19px;border:2.4px solid #fff;border-radius:50%"></div>
<svg class="a" style="left:569px;top:1044px" width="22" height="22" viewBox="0 0 22 22"><g fill="none" stroke="#f4f4f4" stroke-width="1.3"><path d="M1 1 V4 H14 V1 M1 21 V18 H14 V21"/><rect x="1" y="6" width="13" height="10"/><path d="M19 1 V21"/></g><rect x="17.5" y="7.5" width="3" height="3" fill="#f4f4f4"/></svg>
<!-- edge -->
<svg class="a" style="left:629px;top:1040px" width="31" height="31" viewBox="0 0 30 30"><defs><linearGradient id="eg1" x1="0" y1="0.3" x2="1" y2="0.6"><stop offset="0" stop-color="#38c0f2"/><stop offset="0.55" stop-color="#2ec4c8"/><stop offset="1" stop-color="#68e050"/></linearGradient><linearGradient id="eg2" x1="0" y1="0" x2="0.3" y2="1"><stop offset="0" stop-color="#168ee0"/><stop offset="1" stop-color="#0a74d0"/></linearGradient></defs><circle cx="15" cy="15" r="15" fill="url(#eg1)"/><path d="M11.5 16 C12.5 20.5 17 21 22 20.6 C25 20.4 28 20 31 19.5 L31 31 L10 31 Z" fill="#223843"/><path d="M0 15.5 C0.3 11.5 3 8 8.5 7.5 C13 7.3 16.5 9 18 12.5 L18.2 15.5 L14.7 19.2 L11.4 17.2 C10.8 21.5 13 26 17.5 27.6 C21.5 28.8 25.5 27 27.9 23.2 C25.5 27.6 20.8 30 15 30 C6.7 30 0 23.3 0 15.5 Z" fill="url(#eg2)"/><path d="M11.4 17.2 C11 22.5 14.5 27.3 20.5 27.6 C24 27.8 26.8 25.8 27.9 23.2 C24 23.8 19 23.6 15.5 21.6 C13.2 20.2 12 18.8 11.4 17.2 Z" fill="#0e52a4"/><circle cx="14.7" cy="15.8" r="3.3" fill="#223843"/></svg>
<!-- folder -->
<svg class="a" style="left:691px;top:1042px" width="29" height="25" viewBox="0 0 29 25"><path d="M1 1.5 Q1 0.5 2 0.5 L10 0.5 L12.5 3 L27 3 Q28 3 28 4 L28 23 Q28 24 27 24 L2 24 Q1 24 1 23 Z" fill="#f0c040"/><path d="M1 4.5 L28 4.5 L28 23 Q28 24 27 24 L2 24 Q1 24 1 23 Z" fill="#fcd66a"/><path d="M6 25 L6 13.5 Q6 12 7.5 12 L21.5 12 Q23 12 23 13.5 L23 25 L19.5 25 L19.5 16 L9.5 16 L9.5 25 Z" fill="#3f94e0"/></svg>
<!-- calc -->
<svg class="a" style="left:756px;top:1040px" width="23" height="30" viewBox="0 0 23 30"><rect x="0" y="0" width="23" height="30" rx="1.5" fill="#6b7680"/><rect x="2.5" y="2.5" width="18" height="4.5" fill="#42c8ee"/><g fill="#d4d8dc"><rect x="3" y="10" width="4.5" height="4.2"/><rect x="9" y="10" width="4.5" height="4.2"/><rect x="15" y="10" width="4.5" height="4.2"/><rect x="3" y="16" width="4.5" height="4.2"/><rect x="9" y="16" width="4.5" height="4.2"/><rect x="3" y="22" width="4.5" height="4.2"/><rect x="9" y="22" width="4.5" height="4.2"/></g><rect x="15" y="16" width="4.5" height="10.2" fill="#1a4c9a"/></svg>
<!-- skype -->
<svg class="a" style="left:815px;top:1040px" width="30" height="30" viewBox="0 0 30 30"><path d="M8 1 C4 1 1 4 1 8 C1 9.5 1.5 10.5 2 11.5 C1.7 12.6 1.5 13.8 1.5 15 C1.5 22.5 7.5 28.5 15 28.5 C16.2 28.5 17.4 28.3 18.5 28 C19.5 28.6 20.7 29 22 29 C26 29 29 26 29 22 C29 20.7 28.6 19.5 28 18.5 C28.3 17.4 28.5 16.2 28.5 15 C28.5 7.5 22.5 1.5 15 1.5 C13.8 1.5 12.6 1.7 11.5 2 C10.5 1.4 9.3 1 8 1 Z" fill="#0c9ee0"/><path d="M19.5 10 C18.5 8.5 16.8 7.8 14.8 7.8 C12 7.8 10.2 9.3 10.2 11.3 C10.2 15.8 19.5 14.3 19.5 18.3 C19.5 20.3 17.6 21.8 14.8 21.8 C12.6 21.8 10.8 20.8 10 19.3" fill="none" stroke="#fff" stroke-width="2.8" stroke-linecap="round"/></svg>
<!-- nord -->
<svg class="a" style="left:878px;top:1041px" width="28" height="28" viewBox="0 0 28 28"><defs><linearGradient id="ng" x1="0" y1="0" x2="0" y2="1"><stop offset="0" stop-color="#2a98e0"/><stop offset="0.5" stop-color="#2262b0"/><stop offset="1" stop-color="#234c9c"/></linearGradient><linearGradient id="ng2" x1="0" y1="0" x2="0" y2="1"><stop offset="0" stop-color="#ffffff"/><stop offset="1" stop-color="#b8cce0"/></linearGradient></defs><circle cx="14" cy="14" r="13.2" fill="url(#ng)"/><path d="M5.3 18.7 A9.8 9.8 0 1 1 23.3 18.7 L17.6 12.2 L16.3 13 L13.9 10.2 L12 13.3 L10.5 12.2 Z" fill="url(#ng2)"/></svg>
<div class="a" style="left:867px;top:1077px;width:51px;height:3px;background:#76b8ea"></div>
<!-- chrome -->
<svg class="a" style="left:939px;top:1040px" width="30" height="30" viewBox="0 0 30 30"><path d="M2.88 8.00 A14 14 0 0 1 27.12 8.00 L15.00 8.00 L15 15 L8.94 18.50 Z" fill="#dc4a3b"/><path d="M2.88 8.00 A14 14 0 0 1 27.12 8.00 L15.00 8.00 L15 15 L8.94 18.50 Z" fill="#fcc934" transform="rotate(120 15 15)"/><path d="M2.88 8.00 A14 14 0 0 1 27.12 8.00 L15.00 8.00 L15 15 L8.94 18.50 Z" fill="#1fa04f" transform="rotate(240 15 15)"/><circle cx="15" cy="15" r="6.6" fill="#fff"/><circle cx="15" cy="15" r="5.3" fill="#4a8af4"/></svg>
<div class="a" style="left:929px;top:1077px;width:40px;height:3px;background:#76b8ea"></div>
<div class="a" style="left:969px;top:1077px;width:11px;height:3px;background:#5b8fbf"></div>
<!-- siril active -->
<div class="a" style="left:986px;top:1030px;width:56px;height:50px;background:#4b5a63"></div>
<div class="a" style="left:1042px;top:1030px;width:2px;height:50px;background:#3a4850"></div>
<div class="a" style="left:1044px;top:1030px;width:3px;height:50px;background:#4a5862"></div>
<svg class="a" style="left:1001px;top:1040px" width="29" height="29" viewBox="0 0 29 29"><defs><linearGradient id="sg" x1="0" y1="0" x2="0" y2="1"><stop offset="0" stop-color="#033550"/><stop offset="0.2" stop-color="#0c3c62"/><stop offset="0.45" stop-color="#4a5ab0"/><stop offset="0.64" stop-color="#8a5cb8"/><stop offset="0.65" stop-color="#fafafa"/><stop offset="1" stop-color="#ffffff"/></linearGradient></defs><circle cx="14.8" cy="14.5" r="14.1" fill="url(#sg)"/><path d="M0.8 18.7 L5 18.2 L6 17.4 L9 18 L12.5 17.2 L15 16.4 L17 17.7 L20 17.2 L23 17.8 L26 17 L29 17.7 L29 20 L0.8 20 Z" fill="#f8f8f8"/><g fill="#fff"><path d="M21.2 3.4 L22 5 L23.6 5.8 L22 6.6 L21.2 8.2 L20.4 6.6 L18.8 5.8 L20.4 5 Z"/><rect x="11.5" y="3.5" width="1.6" height="1.6"/><rect x="13" y="5" width="1.2" height="1.2"/><rect x="14" y="7" width="1.3" height="1.3"/><rect x="11.5" y="8.8" width="1.2" height="1.2"/><rect x="13.3" y="9.6" width="1.2" height="1.2"/><rect x="10.3" y="9.9" width="1.2" height="1.2"/><rect x="7.2" y="12.5" width="3" height="1.2"/><rect x="4" y="9.5" width="0.9" height="1.4" opacity="0.7"/><rect x="23.8" y="13.8" width="1" height="1.8"/><rect x="18.8" y="13.3" width="1.1" height="1.1"/><path d="M19.5 11.5 Q19 9 21 8.8 Q22.5 9 22.3 10.8 Q22 12.5 20.6 12" fill="none" stroke="#fff" stroke-width="1"/></g></svg>
<div class="a" style="left:986px;top:1077px;width:56px;height:3px;background:#76b8ea"></div>
<div class="a" style="left:1044px;top:1077px;width:3px;height:3px;background:#5b8fbf"></div>
<!-- tray -->
<svg class="a" style="left:1646px;top:1046px" width="20" height="12" viewBox="0 0 20 12"><path d="M2 10 L10 2 L18 10" fill="none" stroke="#f0f0f0" stroke-width="1.4"/></svg>
<svg class="a" style="left:1679px;top:1045px" width="18" height="20" viewBox="0 0 18 20"><path d="M2.5 5 Q4 1.2 8 1.2 Q12 1.2 13.5 5 M2.5 15 Q4 18.8 8 18.8 Q12 18.8 13.5 15" fill="none" stroke="#e8e8e8" stroke-width="1"/><rect x="1.2" y="5.5" width="10" height="9" rx="2" fill="none" stroke="#f0f0f0" stroke-width="1.3"/><path d="M11.5 8.5 L15.5 6 L15.5 14 L11.5 11.5" fill="none" stroke="#f0f0f0" stroke-width="1.3"/></svg>
<svg class="a" style="left:1706px;top:1045px" width="22" height="20" viewBox="0 0 22 20"><rect x="4.5" y="1" width="16" height="11" fill="none" stroke="#f0f0f0" stroke-width="1.3"/><path d="M12.5 12 V16 M8.5 16.5 H16.5" stroke="#f0f0f0" stroke-width="1.3"/><rect x="0.8" y="0.5" width="4" height="4" fill="#213045" stroke="#f0f0f0" stroke-width="1"/><path d="M2.8 4.5 V19" stroke="#f0f0f0" stroke-width="1.3"/></svg>
<svg class="a" style="left:1736px;top:1045px" width="22" height="20" viewBox="0 0 22 20"><path d="M1.5 7 H4.5 L9 3 V16.5 L4.5 12.5 H1.5 Z" fill="none" stroke="#f0f0f0" stroke-width="1.3"/><path d="M12 7.5 Q13.3 9.8 12 12" fill="none" stroke="#f0f0f0" stroke-width="1.3"/><path d="M14.5 5 Q17.5 9.8 14.5 14.5" fill="none" stroke="#f0f0f0" stroke-width="1.3"/><path d="M17 2.5 Q21.5 9.8 17 17" fill="none" stroke="#f0f0f0" stroke-width="1.3"/></svg>
<div class="t" style="left:1791px;top:1037px;font-size:13.8px;color:#f4f4f4">18:44</div>
<div class="t" style="left:1771px;top:1059px;font-size:14.8px;color:#f4f4f4">17/02/2021</div>
<svg class="a" style="left:1867px;top:1044px" width="24" height="22" viewBox="0 0 24 22"><path d="M2 1.5 H22 V16.5 H14.5 L12 19.5 L9.5 16.5 H2 Z" fill="none" stroke="#f0f0f0" stroke-width="1.4" stroke-linejoin="round"/></svg>
<div class="a" style="left:1914px;top:1030px;width:1px;height:50px;background:#5a6478"></div>

</body></html>
